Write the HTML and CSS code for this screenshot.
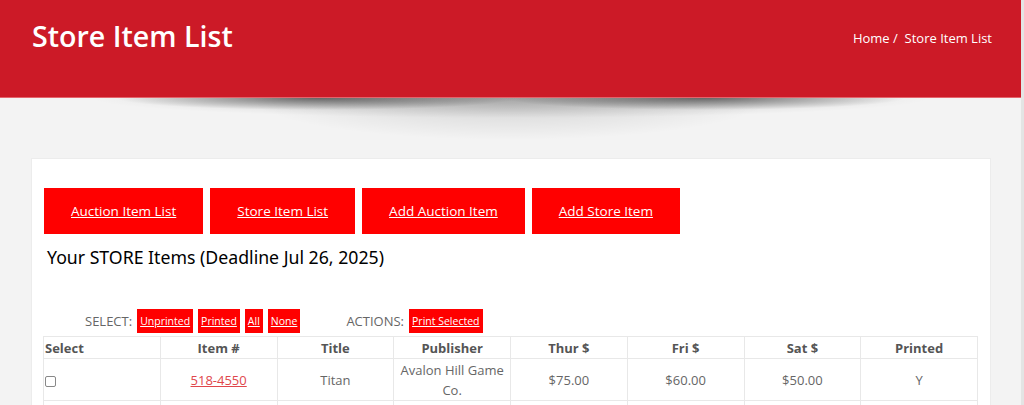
FILE: index.html
```html
<!DOCTYPE html>
<html>
	<head>
		<meta charset="utf-8">
		<title>Store Item List</title>
		<link rel="stylesheet" href="styles.css">
	</head>

	<body>
		<div id="page">
			<header class="page_header">
				<h1 class="page_title">Store Item List</h1>
				<div class="crumbs"><a href="#">Home</a> /&nbsp; Store Item List</div>
			</header>
			<div class="header_shadow"></div>

			<div class="wrap">
				<section class="card">
					<div class="tabs">
						<a class="tab" href="#">Auction Item List</a>
						<a class="tab" href="#">Store Item List</a>
						<a class="tab" href="#">Add Auction Item</a>
						<a class="tab" href="#">Add Store Item</a>
					</div>

					<h2 class="list_title">Your STORE Items (Deadline Jul 26, 2025)</h2>

					<div class="toolbar">
						<span class="label">SELECT:</span>
						<a class="mini" href="#">Unprinted</a>
						<a class="mini" href="#">Printed</a>
						<a class="mini" href="#">All</a>
						<a class="mini" href="#">None</a>
						<span class="label actions">ACTIONS:</span>
						<a class="mini" href="#">Print Selected</a>
					</div>

					<table class="items">
						<thead>
							<tr>
								<th class="left">Select</th>
								<th>Item #</th>
								<th>Title</th>
								<th>Publisher</th>
								<th>Thur $</th>
								<th>Fri $</th>
								<th>Sat $</th>
								<th>Printed</th>
							</tr>
						</thead>
						<tbody>
							<tr>
								<td class="left"><span class="check"></span></td>
								<td><a class="item_link" href="#">518-4550</a></td>
								<td>Titan</td>
								<td>Avalon Hill Game Co.</td>
								<td>$75.00</td>
								<td>$60.00</td>
								<td>$50.00</td>
								<td>Y</td>
							</tr>
							<tr>
								<td class="left">&nbsp;</td>
								<td></td><td></td><td></td><td></td><td></td><td></td><td></td>
							</tr>
						</tbody>
					</table>
				</section>
			</div>
		</div>
	</body>
</html>
```

FILE: styles.css
```css
:root {
	--header: #cc1a27;
	--button: #ff0000;
	--bg: #f3f3f3;
	--line: #e8e8e8;
	--text: #666666;
	--head-text: #555555;
}

html {
	background-color: #e4e4e4;
}

body {
	margin: 0;
	height: 405px;
	overflow: hidden;
	font-family: 'Open Sans', 'Liberation Sans', sans-serif;
	font-size: 13px;
	color: var(--text);
}

#page {
	width: 1021px;
	min-height: 405px;
	background-color: var(--bg);
}

.page_header {
	background-color: var(--header);
	height: 98px;
	border-bottom: 1px solid #e4646c;
	box-sizing: border-box;
	padding: 17px 29px 0 32px;
	display: flex;
	justify-content: space-between;
	align-items: flex-start;
}

.page_title {
	margin: 0;
	color: #ffffff;
	font-size: 28.6px;
	font-weight: 600;
	line-height: 38px;
}

.crumbs {
	color: #ffffff;
	font-size: 13px;
	line-height: 20px;
	padding-top: 11px;
}

.crumbs a {
	color: #ffffff;
	text-decoration: none;
}

/* curved drop shadow under the header */
.header_shadow {
	height: 60px;
	background:
		radial-gradient(ellipse 200px 12px at 31% 0, rgba(0, 0, 0, 0.5), rgba(0, 0, 0, 0) 100%),
		radial-gradient(ellipse 200px 12px at 69% 0, rgba(0, 0, 0, 0.5), rgba(0, 0, 0, 0) 100%),
		radial-gradient(ellipse 420px 20px at 50% 0, rgba(0, 0, 0, 0.22), rgba(0, 0, 0, 0) 100%),
		radial-gradient(ellipse 260px 42px at 50% 0, rgba(0, 0, 0, 0.14), rgba(0, 0, 0, 0) 100%);
}

.wrap {
	padding: 0 30px 0 31px;
}

.card {
	background-color: #ffffff;
	border: 1px solid #ececec;
	border-bottom: none;
	padding: 29px 11px 0 11px;
	min-height: 260px;
}

.tabs {
	display: flex;
	gap: 7px;
	padding-left: 1px;
}

.tab {
	display: block;
	background-color: var(--button);
	color: #ffffff;
	height: 46px;
	line-height: 46px;
	padding: 0 27px;
	font-size: 13.5px;
}

.list_title {
	margin: 9px 0 0 4px;
	font-family: 'Noto Sans', sans-serif;
	font-weight: normal;
	font-size: 17.7px;
	line-height: 28px;
	color: #000000;
}

.toolbar {
	display: flex;
	align-items: center;
	gap: 5px;
	margin-top: 37px;
	padding-left: 42px;
	height: 26px;
}

.label {
	color: var(--text);
	font-size: 13px;
	margin-right: 0;
}

.label.actions {
	margin-left: 41px;
}

.mini {
	display: block;
	background-color: var(--button);
	color: #ffffff;
	font-size: 10.5px;
	line-height: 24px;
	padding: 0 3px;
}

.items {
	width: 935px;
	margin-top: 2px;
	table-layout: fixed;
	border-collapse: collapse;
}

.items th,
.items td {
	border: 1px solid var(--line);
	text-align: center;
	padding: 1px 4px 0 4px;
	line-height: 20px;
	font-size: 13px;
}

.items th {
	color: var(--head-text);
	font-weight: 700;
}

.items td {
	color: var(--text);
}

.items .left {
	text-align: left;
	padding-left: 1px;
}

.check {
	display: inline-block;
	width: 9px;
	height: 9px;
	border: 1px solid #888;
	border-radius: 2px;
	vertical-align: middle;
}

.item_link {
	color: #e0474c;
}
```
